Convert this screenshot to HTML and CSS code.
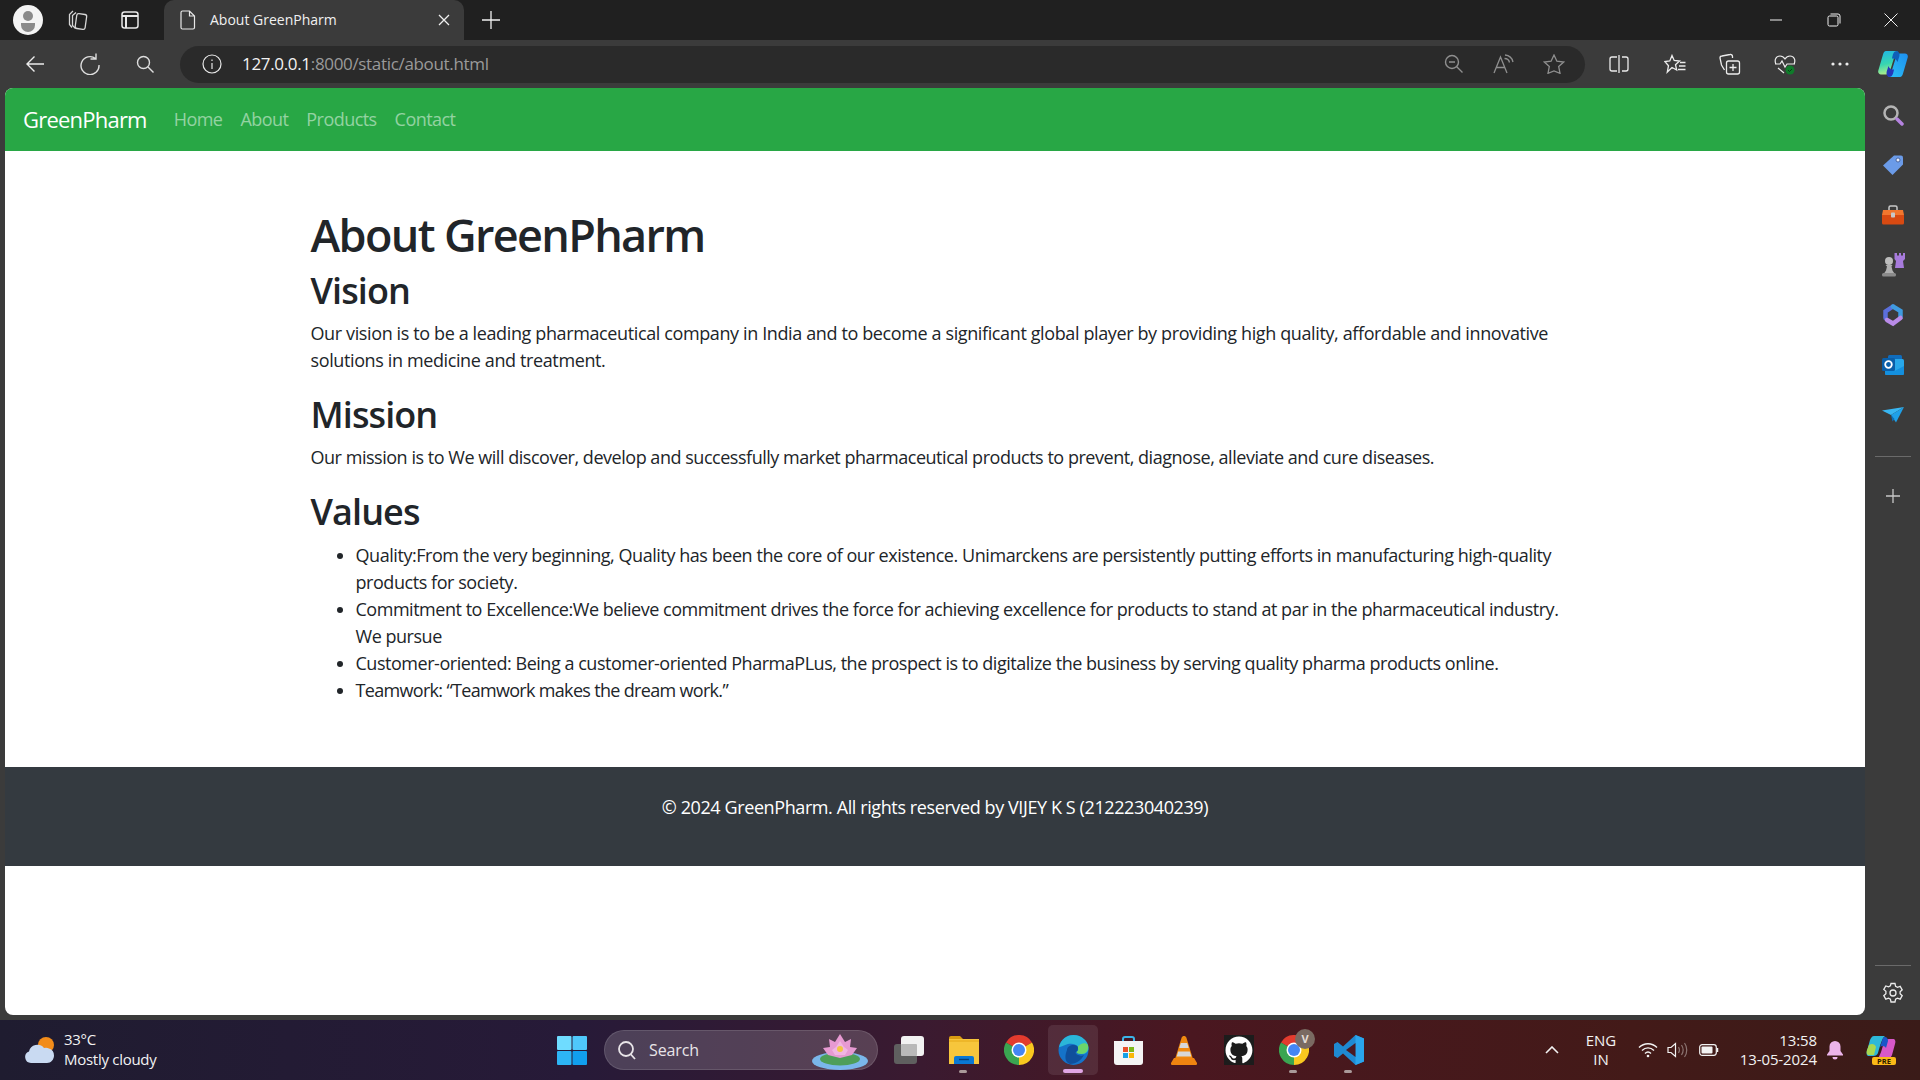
FILE: index.html
```html
<!doctype html>
<html>
<head>
<meta charset="utf-8">
<title>About GreenPharm</title>
<link rel="stylesheet" href="styles.css">
</head>
<body>
<div class="tabstrip">
  <div class="avatar"><svg width="30" height="30" viewBox="0 0 30 30"><circle cx="15" cy="15" r="15" fill="#f4f4f4"/><circle cx="15" cy="11" r="5" fill="#8a8a8a"/><path d="M8 18h14v2a7 7 0 0 1-14 0z" fill="#8a8a8a"/></svg></div>
  <div class="slot s-coll"><svg width="22" height="22" viewBox="0 0 22 22" fill="none" stroke="#d6d6d6" stroke-width="1.3"><rect x="9" y="5" width="10" height="15" rx="2" transform="rotate(8 14 12)"/><path d="M9 3.500 5.500 6.500v10l3 3M6 2 2.500 5.500v10l2.500 3"/></svg></div>
  <div class="slot s-tabs"><svg width="20" height="20" viewBox="0 0 20 20" fill="none" stroke="#e8e8e8" stroke-width="1.5"><rect x="2" y="2" width="16" height="16" rx="2.500"/><path d="M2 6h16M6 6v12" stroke-width="2"/></svg></div>
  <div class="tab">
    <svg width="16" height="20" viewBox="0 0 16 20" fill="none" stroke="#e8e8e8" stroke-width="1.2"><path d="M2.500 1h7l5 5v11.500a1.500 1.500 0 0 1-1.500 1.500H2.500A1.500 1.500 0 0 1 1 17.500v-15A1.500 1.500 0 0 1 2.500 1zM9.500 1v5h5"/></svg>
    <span class="tab-title">About GreenPharm</span>
    <svg class="tab-close" width="12" height="12" viewBox="0 0 12 12" stroke="#f0f0f0" stroke-width="1.300"><path d="M1 1l10 10M11 1 1 11"/></svg>
  </div>
  <div class="slot s-new"><svg width="18" height="18" viewBox="0 0 18 18" stroke="#f0f0f0" stroke-width="1.300"><path d="M9 0v18M0 9h18"/></svg></div>
  <div class="win-btns">
    <div class="win-btn"><svg width="14" height="14" viewBox="0 0 14 14" stroke="#f0f0f0" stroke-width="1"><path d="M1 7h12"/></svg></div>
    <div class="win-btn"><svg width="14" height="14" viewBox="0 0 14 14" fill="none" stroke="#f0f0f0" stroke-width="1"><rect x="1" y="3" width="10" height="10" rx="1.500"/><path d="M3.500 1H11a2 2 0 0 1 2 2v7.500"/></svg></div>
    <div class="win-btn"><svg width="14" height="14" viewBox="0 0 14 14" stroke="#f0f0f0" stroke-width="1"><path d="M.5.500l13 13M13.500.500l-13 13"/></svg></div>
  </div>
</div>

<div class="toolbar">
  <div class="slot"><svg width="20" height="20" viewBox="0 0 20 20" fill="none" stroke="#ececec" stroke-width="1.400"><path d="M19 10H2M9.500 2.500 2 10l7.500 7.500"/></svg></div>
  <div class="slot"><svg width="20" height="22" viewBox="0 0 20 22" fill="none" stroke="#dedede" stroke-width="1.400"><path d="M15.500 5.500A9 9 0 1 0 19 12M16 .5v5.500h-5.500"/></svg></div>
  <div class="slot"><svg width="18" height="18" viewBox="0 0 18 18" fill="none" stroke="#dedede" stroke-width="1.400"><circle cx="7.500" cy="7.500" r="6"/><path d="M12 12l5.500 5.500"/></svg></div>
  <div class="urlbar">
    <svg class="url-info" width="20" height="20" viewBox="0 0 20 20" fill="none" stroke="#e8e8e8" stroke-width="1.200"><circle cx="10" cy="10" r="9"/><path d="M10 9v6M10 5.500v1.500"/></svg>
    <span class="url"><b>127.0.0.1</b>:8000/static/about.html</span>
    <div class="url-icons">
      <div class="slot-50"><svg width="20" height="20" viewBox="0 0 20 20" fill="none" stroke="#8f8f8f" stroke-width="1.400"><circle cx="8" cy="8" r="6.500"/><path d="M12.500 12.500l6 6M5 8h6"/></svg></div>
      <div class="slot-50"><svg width="22" height="20" viewBox="0 0 22 20" fill="none" stroke="#8f8f8f" stroke-width="1.300"><path d="M1 19 7.500 3 14 19M3.500 13.500h8M12 1a9 9 0 0 1 8 7M11.500 4.500a5 5 0 0 1 5 4"/></svg></div>
      <div class="slot-50"><svg width="22" height="20" viewBox="0 0 22 20" fill="none" stroke="#8f8f8f" stroke-width="1.300"><path d="M11 1l2.900 6.200 6.800.8-5 4.600 1.300 6.700L11 16.900 5 19.300l1.300-6.700-5-4.600 6.800-.8z"/></svg></div>
    </div>
  </div>
  <div class="tool-right">
    <div class="slot"><svg width="20" height="20" viewBox="0 0 20 20" fill="none" stroke="#ececec" stroke-width="1.300"><path d="M8 3H3a2 2 0 0 0-2 2v10a2 2 0 0 0 2 2h5M13 3h4a2 2 0 0 1 2 2v10a2 2 0 0 1-2 2h-4M10 1v18"/></svg></div>
    <div class="slot s-shift"><svg width="22" height="20" viewBox="0 0 22 20" fill="none" stroke="#ececec" stroke-width="1.300"><path d="M8 1.500l2.200 5 5.300.5-4 3.700 1.200 5.300L8 13.500 3.300 18l1.200-6.300L.8 7.500 5.800 7zM16 8.500h5.500M15 12h6.500M14 15.500h7.500"/></svg></div>
    <div class="slot"><svg width="22" height="22" viewBox="0 0 22 22" fill="none" stroke="#ececec" stroke-width="1.300"><rect x="7.500" y="8" width="13" height="13" rx="2"/><path d="M14 11v7M10.500 14.500h7M5.500 17 2.500 12 1 5a2 2 0 0 1 2-2l8-1.500a2 2 0 0 1 2.500 2V5"/></svg></div>
    <div class="slot"><svg width="22" height="22" viewBox="0 0 22 22" fill="none"><path d="M2 11c-2-4 0-8 4-8 2 0 4 1.500 5 3 1-1.500 3-3 5-3 4 0 6 4 4 8M1 11h5l2-3 3 6 2-3h8M4 15l6 5" stroke="#ececec" stroke-width="1.200"/><circle cx="16" cy="17" r="4.500" fill="#0f7b2a"/><path d="M14 17l1.500 1.500 2.500-2.500" stroke="#0a3d16" stroke-width="1"/></svg></div>
    <div class="slot"><svg width="18" height="4" viewBox="0 0 18 4" fill="#ececec"><circle cx="2" cy="2" r="1.600"/><circle cx="9" cy="2" r="1.600"/><circle cx="16" cy="2" r="1.600"/></svg></div>
    <div class="slot s-copilot"><svg width="30" height="28" viewBox="0 0 30 28">
      <defs>
        <linearGradient id="cpa" x1="0" y1="0" x2=".2" y2="1"><stop offset="0" stop-color="#1fb5e8"/><stop offset=".6" stop-color="#38d6b0"/><stop offset="1" stop-color="#a8ec8c"/></linearGradient>
        <linearGradient id="cpb" x1="0" y1="1" x2="1" y2="0"><stop offset="0" stop-color="#1d8ff0"/><stop offset="1" stop-color="#2cc0f5"/></linearGradient>
      </defs>
      <path d="M8 1h12c-2 1-3 3-4 7l-4 13c-.7 2-2 3.500-4 3.500H3c-2 0-3.300-1.800-2.700-4L5 4.500C5.600 2.300 6.500 1 8 1z" fill="url(#cpa)"/>
      <path d="M8 1h12c-2 1-3 3-4 7l-4 13c-.7 2-2 3.500-4 3.500H3c-2 0-3.300-1.800-2.700-4L5 4.500C5.600 2.300 6.500 1 8 1z" fill="url(#cpb)" transform="rotate(180 15 14)"/>
      <path d="M19 1c2 .5 3 3 2.300 5.500L19.500 12c-1-3-3.500-4-5.500-3.500 .800-4 1.500-7.500 5-7.500z" fill="#0f5fb8"/>
      <path d="M11 27c-2-.5-3-3-2.300-5.500L10.500 16c1 3 3.500 4 5.500 3.500-.8 4-1.500 7.500-5 7.500z" fill="#2437b8"/>
    </svg></div>
  </div>
</div>

<div class="middle">
  <div class="page">
    <nav class="navbar">
      <a class="brand">GreenPharm</a>
      <a class="nav-link">Home</a>
      <a class="nav-link">About</a>
      <a class="nav-link">Products</a>
      <a class="nav-link">Contact</a>
    </nav>
    <div class="container">
      <h1>About GreenPharm</h1>
      <h2>Vision</h2>
      <p class="vision">Our vision is to be a leading pharmaceutical company in India and to become a significant global player by providing high quality, affordable and innovative solutions in medicine and treatment.</p>
      <h2>Mission</h2>
      <p class="tight">Our mission is to We will discover, develop and successfully market pharmaceutical products to prevent, diagnose, alleviate and cure diseases.</p>
      <h2>Values</h2>
      <ul>
        <li class="quality">Quality:From the very beginning, Quality has been the core of our existence. Unimarckens are persistently putting efforts in manufacturing high-quality products for society.</li>
        <li class="commit">Commitment to Excellence:We believe commitment drives the force for achieving excellence for products to stand at par in the pharmaceutical industry. We pursue</li>
        <li class="tight">Customer-oriented: Being a customer-oriented PharmaPLus, the prospect is to digitalize the business by serving quality pharma products online.</li>
        <li class="teamwork">Teamwork: “Teamwork makes the dream work.”</li>
      </ul>
    </div>
    <footer class="footer"><p>© 2024 GreenPharm. All rights reserved by VIJEY K S (212223040239)</p></footer>
  </div>
  <aside class="sidebar">
    <div class="side-item"><svg width="22" height="22" viewBox="0 0 22 22" fill="none"><circle cx="9" cy="9" r="6.500" stroke="#b4b4b4" stroke-width="2.500"/><path d="M15 15l5 5" stroke="#b583e0" stroke-width="3.500" stroke-linecap="round"/></svg></div>
    <div class="side-item"><svg width="22" height="22" viewBox="0 0 22 22"><path d="M12 1.500h7a2 2 0 0 1 2 2v7L10.500 21 1 11.500z" fill="#6b9be8"/><circle cx="16" cy="6" r="2" fill="#e8eefc" stroke="#35518c" stroke-width=".8"/></svg></div>
    <div class="side-item"><svg width="24" height="20" viewBox="0 0 24 20"><path d="M8 5V2.500A1.500 1.500 0 0 1 9.500 1h5A1.500 1.500 0 0 1 16 2.500V5" fill="none" stroke="#c9c9c9" stroke-width="1.500"/><path d="M2 5h20l1 5H1z" fill="#f2762e"/><path d="M1 10h22v8a1.500 1.500 0 0 1-1.500 1.500h-19A1.500 1.500 0 0 1 1 18z" fill="#d84a12"/><rect x="10" y="7.500" width="4" height="5" rx=".8" fill="#c8c8c8"/></svg></div>
    <div class="side-item"><svg width="24" height="24" viewBox="0 0 24 24"><path d="M13.500 0h2.500v2.500h2V0h2v2.500h2V0H24v6l-2 2 1 7H14l1-7-1.500-2z" fill="#a77bdc"/><circle cx="8" cy="8" r="4" fill="#bdbdbd"/><path d="M4.500 12h7l-1 1.500 1 4 2 3H3l2-3 1-4z" fill="#b0b0b0"/><rect x="1" y="20" width="14" height="3.500" rx="1.500" fill="#8b8b8b"/></svg></div>
    <div class="side-item"><svg width="22" height="24" viewBox="0 0 22 24" fill="none" stroke-width="4.500" stroke-linecap="round"><path d="M3.500 15V8.500L11 3.500" stroke="#5b6fdc"/><path d="M11 3.500l7.500 4.500v6" stroke="#3f9be0"/><path d="M18.500 15l-7.500 5.500L5 17" stroke="#b98be8"/></svg></div>
    <div class="side-item"><svg width="22" height="20" viewBox="0 0 22 20"><rect x="6" y="0" width="14" height="10" rx="1.500" fill="#0f6cbd"/><rect x="3" y="4" width="19" height="15.500" rx="1.500" fill="#28a8ea"/><path d="M3 11l9.500 5L22 11v8a1 1 0 0 1-1 1H4a1 1 0 0 1-1-1z" fill="#1490df"/><rect x="0" y="3" width="13" height="13" rx="1.500" fill="#0a5ea8"/><circle cx="6.500" cy="9.500" r="3.300" fill="none" stroke="#fff" stroke-width="1.800"/></svg></div>
    <div class="side-item"><svg width="22" height="16" viewBox="0 0 22 16"><path d="M0 3.500 22 0 9 8z" fill="#38b6f2"/><path d="M22 0 14 15.500 9 8z" fill="#1fa0e8"/><path d="M9 8l1.500 6.500 2-2.500z" fill="#0c6fb8"/></svg></div>
    <div class="side-rule"></div>
    <div class="side-plus"><svg width="16" height="16" viewBox="0 0 16 16" stroke="#c8c8c8" stroke-width="1.300"><path d="M8 1v14M1 8h14"/></svg></div>
    <div class="side-spacer"></div>
    <div class="side-rule rule-low"></div>
    <div class="side-gear"><svg width="22" height="22" viewBox="0 0 22 22" fill="none" stroke="#ececec" stroke-width="1.300"><circle cx="11" cy="11" r="3"/><path d="M9 1.500h4l.6 2.800 1.900 1 2.700-.9 2 3.400-2.100 1.900v2.100l2.100 1.900-2 3.400-2.700-.9-1.900 1-.6 2.800H9l-.6-2.800-1.900-1-2.700.9-2-3.400 2.100-1.900V9.300L1.800 7.400l2-3.400 2.700.9 1.900-1z"/></svg></div>
  </aside>
</div>

<div class="taskbar">
  <div class="weather">
    <svg width="32" height="28" viewBox="0 0 32 28"><circle cx="22" cy="9" r="8" fill="#f28c1a"/><path d="M7 27a6 6 0 0 1-2-11.600A8.500 8.500 0 0 1 20 12a6 6 0 0 1 5 .5 7.500 7.500 0 0 1 5 7c0 4-3 7.500-7 7.500z" fill="#c9daf2"/></svg>
    <div class="weather-text"><div>33°C</div><div>Mostly cloudy</div></div>
  </div>
  <div class="win-logo">
    <svg width="30" height="29" viewBox="0 0 30 29"><rect width="14.500" height="14" rx="1" fill="#6fdcff"/><rect x="15.500" width="14.500" height="14" rx="1" fill="#4fc8fb"/><rect y="15" width="14.500" height="14" rx="1" fill="#2db5f5"/><rect x="15.500" y="15" width="14.500" height="14" rx="1" fill="#119fee"/></svg>
  </div>
  <div class="searchbox">
    <svg width="20" height="20" viewBox="0 0 20 20" fill="none" stroke="#e8e4e8" stroke-width="1.800"><circle cx="9" cy="9" r="7"/><path d="M13.500 14l4.500 5"/></svg>
    <span>Search</span>
    <svg class="lotus" width="58" height="38" viewBox="0 0 58 38"><ellipse cx="29" cy="29" rx="28" ry="9" fill="#7ab7ea"/><ellipse cx="29" cy="27" rx="20" ry="6.500" fill="#4e9e58"/><path d="M29 2l5 8 6-3-1 8 7 1-5 7-12 3-12-3-5-7 7-1-1-8 6 3z" fill="#e79ad2"/><path d="M29 9l4 6 4 3-3 5h-10l-3-5 4-3z" fill="#f1b5e2"/><circle cx="29" cy="17" r="3" fill="#f2c644"/></svg>
  </div>
  <div class="apps">
    <div class="app">
      <svg width="30" height="30" viewBox="0 0 30 30"><rect x="0" y="9" width="23" height="20" rx="3" fill="#5f5f5f"/><rect x="7" y="1" width="23" height="20" rx="3" fill="#f2f2f2"/><rect x="7" y="9" width="16" height="12" rx="1" fill="#b9b9b9"/></svg>
    </div>
    <div class="app dot">
      <svg width="30" height="28" viewBox="0 0 30 28"><path d="M0 2a2 2 0 0 1 2-2h9l3 3h-14z" fill="#d99c12"/><path d="M0 3h30v25H0z" fill="#f7c63c"/><path d="M0 5h30" stroke="#e6a817"/><path d="M5 22a2 2 0 0 1 2-2h16a2 2 0 0 1 2 2v6H5z" fill="#0a78d4"/><path d="M10 23.500h10" stroke="#063f78" stroke-width="1.400"/></svg>
    </div>
    <div class="app">
      <svg width="30" height="30" viewBox="0 0 30 30"><path d="M15 15 2 7.500A15 15 0 0 1 28 7.500z" fill="#e33b2e"/><path d="M15 15 28 7.500A15 15 0 0 1 15 30z" fill="#f9c81f"/><path d="M15 15 15 30A15 15 0 0 1 2 7.500z" fill="#3aa551"/><circle cx="15" cy="15" r="7.500" fill="#fff"/><circle cx="15" cy="15" r="6" fill="#4486f4"/></svg>
    </div>
    <div class="app active">
      <svg width="31" height="30" viewBox="0 0 31 30"><circle cx="15.500" cy="15" r="15" fill="#1573c9"/><path d="M1 12C3 4 9 0 15.500 0c8 0 15 6 15 13 0 4-3 6-6.500 6-3 0-5-1-5-2 2-1 2-3 1-5-2-3-6-4-10-3-4 1-7 3-9 3z" fill="#2bb6d8"/><path d="M30 10c1 5-2 9-6.500 9-3 0-5-1-5-2 2-1 2-3 1-5 3-4 8-5 10.500-2z" fill="#6bd66b"/><path d="M9 15c0-3 3-5 7-5s5 3 3 6c-2 1-2 3 1 4 3 1 4 1 6 0-3 6-9 9-14 9-6-2-5-9-3-14z" fill="#0f4f9c"/></svg>
    </div>
    <div class="app">
      <svg width="29" height="29" viewBox="0 0 29 29"><path d="M9 6V3a2 2 0 0 1 2-2h7a2 2 0 0 1 2 2v3" fill="none" stroke="#3bb4e8" stroke-width="2"/><path d="M0 5h29v21a3 3 0 0 1-3 3H3a3 3 0 0 1-3-3z" fill="#f4f4f4"/><rect x="9" y="11" width="5" height="5" fill="#e8502a"/><rect x="15" y="11" width="5" height="5" fill="#7db81a"/><rect x="9" y="17" width="5" height="5" fill="#14a0e8"/><rect x="15" y="17" width="5" height="5" fill="#f9b707"/></svg>
    </div>
    <div class="app">
      <svg width="26" height="29" viewBox="0 0 26 29"><path d="M13 0c1 0 2 .5 2.500 2L22 23H4L10.500 2C11 .5 12 0 13 0z" fill="#f08a10"/><path d="M9.800 7h6.400l1.500 5H8.300zM7.200 15.500h11.600l1.500 5H5.700z" fill="#d8d8d8"/><path d="M3 22h20l3 5a1.500 1.500 0 0 1-1.500 2H1.500A1.500 1.500 0 0 1 0 27z" fill="#ef8410"/></svg>
    </div>
    <div class="app">
      <svg width="30" height="30" viewBox="0 0 30 30"><rect width="30" height="30" fill="#1c1c1c"/><path fill="#fff" d="M15 1.500C7.500 1.500 1.500 7.600 1.500 15.200c0 6 3.900 11.100 9.200 12.900.7.100.9-.3.900-.7v-2.300c-3.800.8-4.600-1.700-4.600-1.700-.6-1.600-1.500-2-1.500-2-1.200-.9.100-.9.100-.9 1.400.1 2.100 1.400 2.100 1.400 1.200 2.100 3.200 1.500 4 1.200.1-.9.500-1.500.9-1.800-3-.4-6.200-1.500-6.200-6.700 0-1.500.5-2.700 1.400-3.600-.1-.4-.6-1.800.1-3.600 0 0 1.100-.4 3.700 1.400 1.100-.3 2.200-.4 3.400-.5 1.100 0 2.300.2 3.400.5 2.600-1.800 3.700-1.400 3.700-1.400.7 1.900.3 3.200.1 3.600.9.900 1.400 2.100 1.400 3.600 0 5.200-3.200 6.300-6.200 6.700.5.400.9 1.200.9 2.500v3.700c0 .4.200.8.900.7 5.300-1.800 9.200-6.900 9.200-12.900C28.500 7.600 22.500 1.500 15 1.500z"/></svg>
    </div>
    <div class="app dot">
      <svg width="30" height="30" viewBox="0 0 30 30"><path d="M15 15 2 7.500A15 15 0 0 1 28 7.500z" fill="#e33b2e"/><path d="M15 15 28 7.500A15 15 0 0 1 15 30z" fill="#f9c81f"/><path d="M15 15 15 30A15 15 0 0 1 2 7.500z" fill="#3aa551"/><circle cx="15" cy="15" r="7.500" fill="#fff"/><circle cx="15" cy="15" r="6" fill="#4486f4"/></svg>
      <span class="badge">V</span>
    </div>
    <div class="app dot">
      <svg width="30" height="30" viewBox="0 0 30 30"><path d="M21.500 0 30 3.500v23L21.500 30 9 18.500 3.500 23 0 21V9l3.500-2L9 11.500z" fill="#1f8ad2"/><path d="M21.500 0 30 3.500v23L21.500 30z" fill="#2aa5ec"/><path d="M21.500 8 12 15l9.500 7z" fill="#4a1a22"/></svg>
    </div>
  </div>
  <div class="tray">
    <svg class="tray-up" width="14" height="8" viewBox="0 0 14 8" fill="none" stroke="#f2f2f2" stroke-width="1.600"><path d="M1 7l6-6 6 6"/></svg>
    <div class="lang"><div>ENG</div><div>IN</div></div>
    <svg class="tray-wifi" width="20" height="16" viewBox="0 0 20 16" fill="none" stroke="#f2f2f2" stroke-width="1.400"><path d="M1 5.500c5-5 13-5 18 0M4 8.500c3.500-3.500 8.500-3.500 12 0M7 11.500c2-2 4-2 6 0"/><circle cx="10" cy="14" r="1.300" fill="#f2f2f2" stroke="none"/></svg>
    <svg class="tray-vol" width="21" height="16" viewBox="0 0 21 16" fill="none" stroke="#f2f2f2" stroke-width="1.200"><path d="M1 5.500h3L8.500 1.500v13L4 10.500H1z"/><path d="M11.500 5c1.300 2 1.300 4 0 6M14.500 3c2 3 2 7 0 10M17.500 1c3 4 3 10 0 14" stroke="#8c7572"/></svg>
    <svg class="tray-bat" width="20" height="12" viewBox="0 0 20 12" fill="none"><rect x=".7" y=".7" width="16.600" height="10.600" rx="2.500" stroke="#f2f2f2" stroke-width="1.200"/><rect x="2.500" y="2.500" width="11" height="7" rx="1" fill="#f2f2f2"/><path d="M18.500 4v4" stroke="#f2f2f2" stroke-width="1.500"/></svg>
    <div class="clock"><div>13:58</div><div>13-05-2024</div></div>
    <svg class="tray-bell" width="16" height="19" viewBox="0 0 16 19" fill="#ecb4ea"><path d="M8 0a5.500 5.500 0 0 1 5.500 5.500V10l2.500 3.500v1H0v-1L2.500 10V5.500A5.500 5.500 0 0 1 8 0z"/><path d="M5.500 16h5a2.500 2.500 0 0 1-5 0z"/></svg>
    <svg class="tray-pre" width="30" height="29" viewBox="0 0 30 29"><path d="M8 0h11c-3 2-5 10-7 17-1 2-2 3-5 3H3c-2 0-3-2-2-5L4 4c1-2 2-4 4-4z" fill="#2eb8d8"/><path d="M3 9c3-2 6-1 7 2l-2 8H3c-2 0-3-2-2-5z" fill="#a8d850"/><path d="M22 23H11c3-2 5-10 7-17 1-2 2-3 5-3h4c2 0 3 2 2 5l-3 11c-1 2-2 4-4 4z" fill="#d858c8"/><path d="M19 1c2 0 3 2 3 4l-2 7c-1-2-4-3-6-1l2-6c1-3 1-4 3-4z" fill="#1a56c8"/><rect x="6" y="21" width="24" height="8" rx="2" fill="#fbb917"/><text x="18" y="27.800" font-size="7.500" font-weight="700" text-anchor="middle" fill="#2a1a00" font-family="Open Sans">PRE</text></svg>
  </div>
</div>
</body>
</html>
```

FILE: styles.css
```css
*{box-sizing:border-box;}
html,body{margin:0;padding:0;}
body{
    width:1920px;
    height:1080px;
    overflow:hidden;
    display:flex;
    flex-direction:column;
    background:#3b3b3b;
    font-family:"Open Sans","Noto Sans",sans-serif;
    color:#212529;
}
svg{display:block;flex:none;}

/* browser: tabs */
.tabstrip{
    height:40px;
    background:#202020;
    display:flex;
    align-items:center;
    padding-left:13px;
    flex:none;
}
.avatar{width:30px;height:30px;}
.slot,.slot-50{
    display:flex;
    align-items:center;
    justify-content:center;
    flex:none;
    width:55px;
    height:40px;
}
.slot-50{width:50px;}
.s-coll{width:46px;margin-left:12px;}
.s-tabs{width:50px;margin-left:4px;}
.tab{
    width:300px;
    height:40px;
    margin-left:9px;
    background:#3b3b3b;
    border-radius:10px 10px 0 0;
    display:flex;
    align-items:center;
    padding-left:16px;
    color:#f0f0f0;
    font-size:14px;
}
.tab-title{margin-left:14px;flex:1;line-height:18px;margin-bottom:1px;}
.tab-close{margin-right:14px;}
.s-new{width:54px;}
.win-btns{margin-left:auto;display:flex;}
.win-btn{
    width:57.500px;
    height:40px;
    display:flex;
    align-items:center;
    justify-content:center;
}

/* browser: address bar */
.toolbar{
    height:48px;
    background:#3b3b3b;
    display:flex;
    align-items:center;
    padding-left:7px;
    flex:none;
}
.toolbar .slot{height:48px;}
.urlbar{
    width:1405px;
    height:37px;
    margin-left:8px;
    background:#2a2a2a;
    border-radius:19px;
    display:flex;
    align-items:center;
    padding-left:22px;
}
.url{
    margin-left:20px;
    margin-bottom:2px;
    font-size:17px;
    letter-spacing:-.33px;
    color:#9a9a9a;
}
.url b{font-weight:400;color:#f2f2f2;}
.url-icons{margin-left:auto;display:flex;padding-right:6px;}
.tool-right{display:flex;margin-left:6px;}
.s-shift{margin-left:1px;}
.s-copilot{width:52px;}

/* page */
.middle{flex:1;display:flex;min-height:0;}
.page{
    width:1860px;
    margin-left:5px;
    margin-bottom:5px;
    background:#fff;
    border-radius:8px;
    overflow:hidden;
    display:flex;
    flex-direction:column;
    align-items:stretch;
}
.navbar{
    height:63px;
    background:#28a745;
    display:flex;
    align-items:center;
    padding-left:18px;
    padding-bottom:2px;
    flex:none;
}
.brand{color:#fff;font-size:22px;letter-spacing:-.78px;margin-right:27px;}
.nav-link{color:rgba(255,255,255,.5);font-size:18px;letter-spacing:-.55px;margin-right:18px;}
.container{
    width:1249px;
    margin:0 auto;
    padding-top:57px;
    padding-bottom:45px;
    font-size:18px;
    line-height:27px;
    letter-spacing:-.46px;
}
h1{font-size:45px;line-height:54px;font-weight:600;margin:0 0 7px;letter-spacing:-1.65px;}
h2{font-size:36px;line-height:43px;font-weight:600;margin:0 0 8px;letter-spacing:-.9px;}
p{margin:0 0 19px;}
.vision{letter-spacing:-.38px;}
.tight{letter-spacing:-.47px;}
.quality{letter-spacing:-.445px;}
.commit{letter-spacing:-.475px;}
.teamwork{letter-spacing:-.68px;}
ul{margin:0 -10px 18px 0;padding:1px 0 0 45px;}
.footer{
    background:#343a40;
    color:#fff;
    height:99px;
    padding-top:27px;
    text-align:center;
    font-size:18px;
    line-height:27px;
    letter-spacing:-.4px;
    flex:none;
}

/* sidebar */
.sidebar{
    width:55px;
    display:flex;
    flex-direction:column;
    align-items:center;
    padding-top:2px;
    padding-bottom:16px;
}
.side-item{
    width:54px;
    height:50px;
    display:flex;
    align-items:center;
    justify-content:center;
}
.side-rule{width:36px;height:1px;background:#6a6a6a;margin-top:16px;}
.side-plus{margin-top:31px;}
.side-spacer{flex:1;}
.rule-low{margin-top:0;}
.side-gear{margin-top:16px;}

/* windows taskbar */
.taskbar{
    height:60px;
    flex:none;
    display:flex;
    align-items:center;
    background:linear-gradient(90deg,#1f1c30 0%,#271a38 30%,#3a1a30 48%,#4a1720 62%,#431a18 85%,#3a1b18 100%);
    color:#f2f2f2;
    font-size:15px;
}
.weather{
    width:557px;
    display:flex;
    align-items:center;
    padding-left:24px;
}
.weather-text{margin-left:8px;margin-bottom:2px;line-height:20px;letter-spacing:-.28px;}
.win-logo{width:47px;}
.searchbox{
    width:274px;
    height:40px;
    border-radius:20px;
    background:rgba(255,255,255,.17);
    border:1px solid rgba(255,255,255,.12);
    display:flex;
    align-items:center;
    padding-left:12px;
    font-size:16px;
    color:#e8e4e8;
}
.searchbox span{margin-left:12px;letter-spacing:-.1px;}
.lotus{margin-left:auto;margin-right:8px;margin-top:1px;}
.apps{display:flex;margin-left:3px;}
.app{
    width:55px;
    height:60px;
    display:flex;
    align-items:center;
    justify-content:center;
    position:relative;
}
.app.active::before{
    content:"";
    position:absolute;
    left:2px;
    right:3px;
    top:5px;
    bottom:5px;
    background:rgba(255,255,255,.09);
    border-radius:5px;
}
.app svg{position:relative;}
.app.dot::after,.app.active::after{
    content:"";
    position:absolute;
    left:23px;
    bottom:7px;
    width:8px;
    height:3px;
    border-radius:2px;
    background:#aa9a9a;
}
.app.active::after{
    left:17px;
    width:20px;
    height:4px;
    background:#e0a6e4;
}
.badge{
    position:absolute;
    left:29px;
    top:9px;
    width:20px;
    height:20px;
    border-radius:50%;
    background:#7a6a62;
    color:#e4dcd6;
    font-size:11px;
    font-weight:700;
    text-align:center;
    line-height:20px;
}
.tray{
    flex:1;
    display:flex;
    align-items:center;
    padding-left:170px;
}
.lang{width:66px;margin-left:9px;text-align:center;line-height:19px;}
.tray svg{flex:none;}
.tray-up{margin-left:-1px;}
.tray-wifi{margin-left:4px;}
.tray-vol{margin-left:9px;}
.tray-bat{margin-left:11px;}
.clock{width:98px;margin-bottom:1px;text-align:right;line-height:19px;letter-spacing:-.1px;}
.tray-bell{margin-left:10px;}
.tray-pre{margin-left:23px;}
```
